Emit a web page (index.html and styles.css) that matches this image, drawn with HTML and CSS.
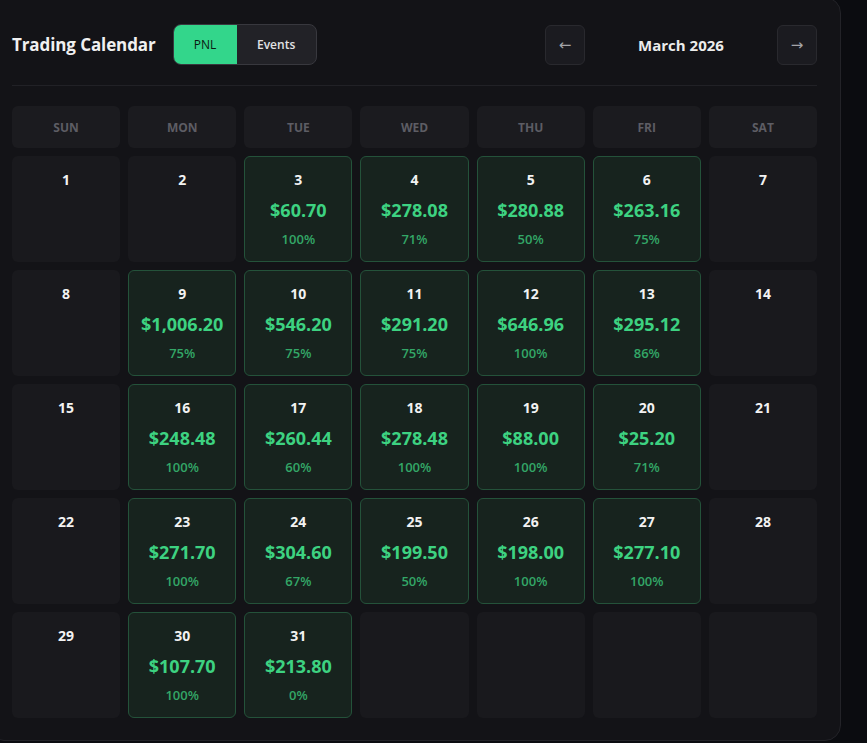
FILE: index.html
```html
<!DOCTYPE html>
<html lang="en">
<head>
  <meta charset="UTF-8">
  <meta name="viewport" content="width=device-width, initial-scale=1.0">
  <title>Trading Calendar</title>
  <link rel="stylesheet" href="styles.css">
</head>
<body>
  <div class="panel">
    <div class="panel-header">
      <div class="title-group">
        <h1 class="title">Trading Calendar</h1>
        <div class="toggle">
          <button class="toggle-btn active">PNL</button>
          <button class="toggle-btn">Events</button>
        </div>
      </div>
      <div class="month-nav">
        <button class="nav-btn">&larr;</button>
        <div class="month-label">March 2026</div>
        <button class="nav-btn">&rarr;</button>
      </div>
    </div>

    <div class="calendar" id="calendar">
      <div class="weekday">Sun</div>
      <div class="weekday">Mon</div>
      <div class="weekday">Tue</div>
      <div class="weekday">Wed</div>
      <div class="weekday">Thu</div>
      <div class="weekday">Fri</div>
      <div class="weekday">Sat</div>
    </div>
  </div>

  <script>
    // daily pnl + win rate for the month, keyed by day
    const trades = {
      3: ['$60.70', '100%'],
      4: ['$278.08', '71%'],
      5: ['$280.88', '50%'],
      6: ['$263.16', '75%'],
      9: ['$1,006.20', '75%'],
      10: ['$546.20', '75%'],
      11: ['$291.20', '75%'],
      12: ['$646.96', '100%'],
      13: ['$295.12', '86%'],
      16: ['$248.48', '100%'],
      17: ['$260.44', '60%'],
      18: ['$278.48', '100%'],
      19: ['$88.00', '100%'],
      20: ['$25.20', '71%'],
      23: ['$271.70', '100%'],
      24: ['$304.60', '67%'],
      25: ['$199.50', '50%'],
      26: ['$198.00', '100%'],
      27: ['$277.10', '100%'],
      30: ['$107.70', '100%'],
      31: ['$213.80', '0%']
    };

    const calendar = document.getElementById('calendar');
    const daysInMonth = 31;
    const firstWeekday = 0; // March 1st 2026 is a Sunday

    for (let i = 0; i < 35; i++) {
      const day = i - firstWeekday + 1;
      const cell = document.createElement('div');
      cell.className = 'day';

      if (day >= 1 && day <= daysInMonth) {
        cell.innerHTML = '<div class="day-num">' + day + '</div>';
        if (trades[day]) {
          cell.classList.add('profit');
          cell.innerHTML +=
            '<div class="day-pnl">' + trades[day][0] + '</div>' +
            '<div class="day-rate">' + trades[day][1] + '</div>';
        }
      }
      calendar.appendChild(cell);
    }
  </script>
</body>
</html>
```

FILE: styles.css
```css
* {
  margin: 0;
  padding: 0;
  box-sizing: border-box;
}

body {
  background: #0b0c10;
  font-family: 'Open Sans', 'Noto Sans', sans-serif;
  color: #f2f2f2;
  overflow: hidden;
  height: 100vh;
}

.panel {
  width: 853px;
  margin: -3px 0 0 -12px;
  padding: 26px 23px 22px;
  background: #131317;
  border: 1px solid #232328;
  border-radius: 16px;
}

.panel-header {
  display: flex;
  justify-content: space-between;
  align-items: center;
  height: 62px;
  padding-bottom: 20px;
  border-bottom: 1px solid #212126;
}

.title-group {
  display: flex;
  align-items: center;
  gap: 17px;
}

.title {
  font-size: 17px;
  font-weight: 700;
  color: #f0f0f0;
  letter-spacing: -0.1px;
}

.toggle {
  display: flex;
  height: 41px;
  border: 1px solid #38383e;
  border-radius: 8px;
  overflow: hidden;
  background: #222227;
}

.toggle-btn {
  border: none;
  background: transparent;
  font-family: inherit;
  font-size: 12px;
  font-weight: 600;
  color: #e2e2e4;
  width: 79px;
  cursor: pointer;
}

.toggle-btn.active {
  width: 63px;
  background: #33d68b;
  color: #0c1a12;
  font-weight: 500;
}

.month-nav {
  display: flex;
  align-items: center;
}

.nav-btn {
  width: 40px;
  height: 40px;
  border: 1px solid #29292e;
  border-radius: 6px;
  background: #1b1b20;
  color: #a4a4a8;
  font-size: 15px;
  font-family: 'DejaVu Sans', sans-serif;
  cursor: pointer;
}

.month-label {
  width: 192px;
  text-align: center;
  font-size: 15px;
  font-weight: 700;
  color: #ececec;
}

.calendar {
  display: grid;
  grid-template-columns: repeat(7, 1fr);
  grid-auto-rows: 106px;
  grid-template-rows: 42px;
  gap: 8px;
  margin-top: 20px;
}

.weekday {
  display: flex;
  justify-content: center;
  align-items: center;
  background: #1b1b1f;
  border-radius: 6px;
  font-size: 12px;
  font-weight: 700;
  text-transform: uppercase;
  color: #5d5d64;
}

.day {
  display: flex;
  flex-direction: column;
  align-items: center;
  padding-top: 13px;
  background: #19191d;
  border: 1px solid transparent;
  border-radius: 6px;
}

.day.profit {
  background: #17231e;
  border-color: #24523a;
}

.day-num {
  font-size: 14px;
  line-height: 20px;
  font-weight: 700;
  color: #f2f2f2;
}

.day-pnl {
  margin-top: 8px;
  font-size: 18px;
  line-height: 24px;
  font-weight: 700;
  color: #3dd281;
}

.day-rate {
  margin-top: 8px;
  font-size: 13px;
  line-height: 18px;
  font-weight: 600;
  color: #33a767;
}
```
